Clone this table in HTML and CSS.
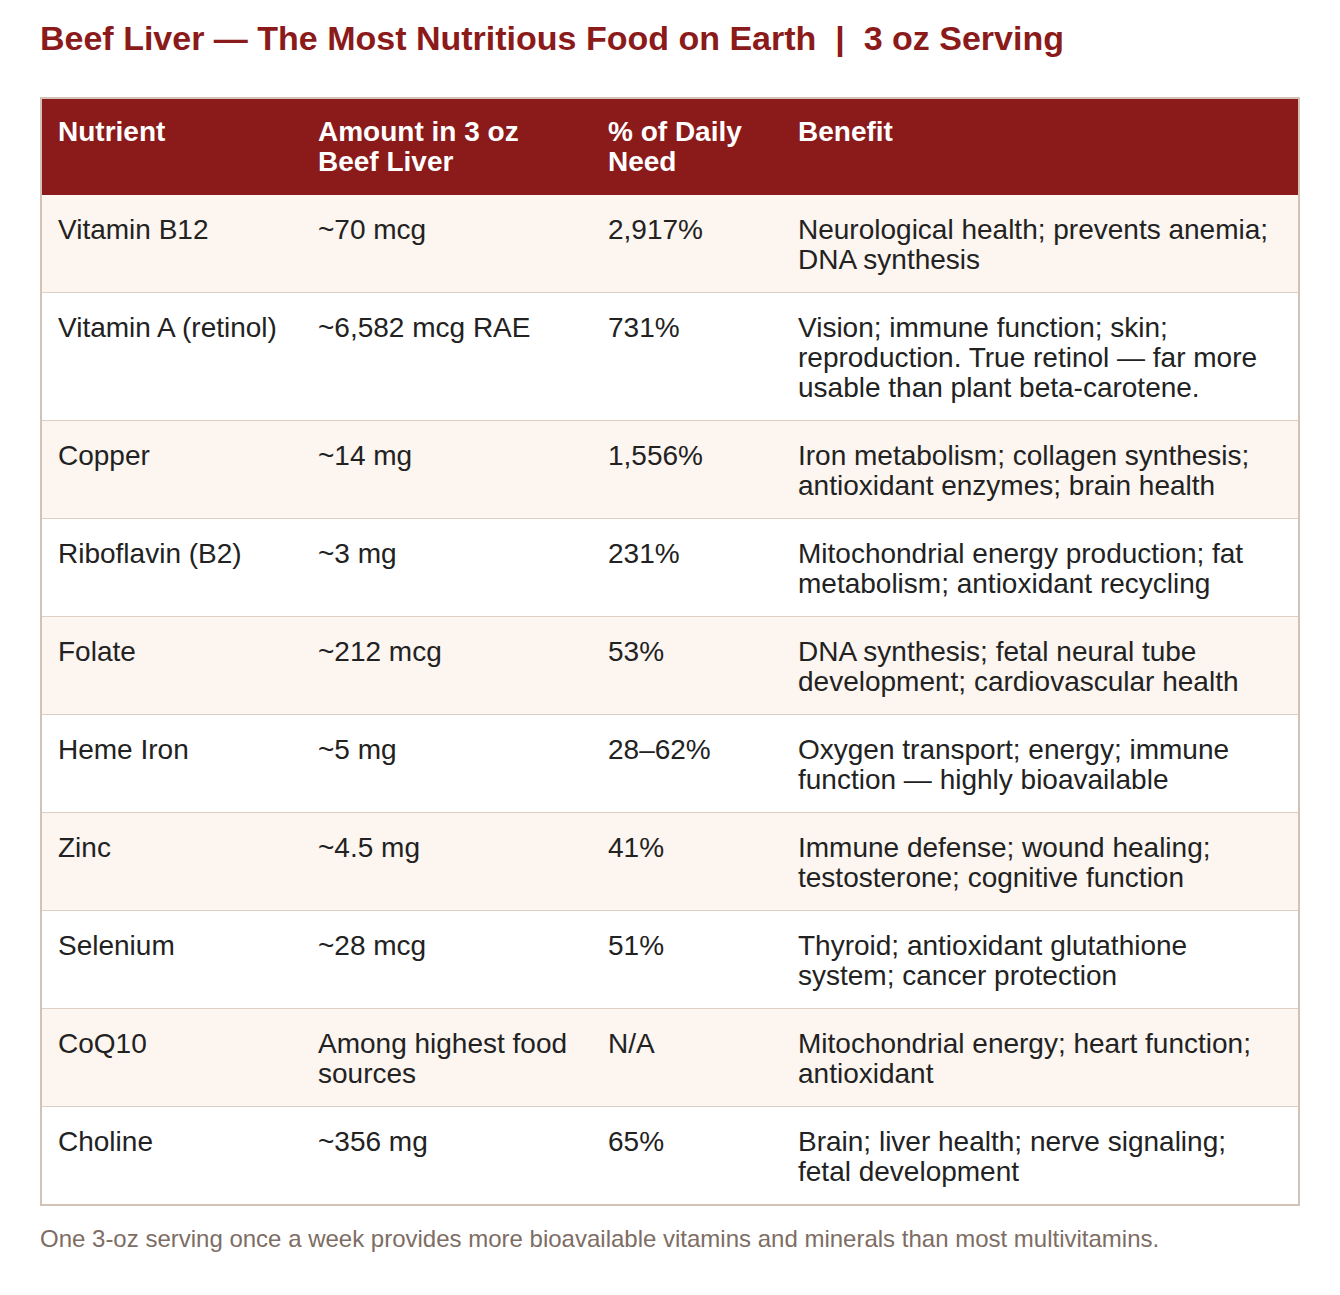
FILE: index.html
```html
<!DOCTYPE html>
<html lang="en">
<head>
<meta charset="utf-8">
<title>Beef Liver — The Most Nutritious Food on Earth</title>
<link rel="stylesheet" href="styles.css">
</head>
<body>
<main class="page">
  <h1 class="title">Beef Liver — The Most Nutritious Food on Earth &nbsp;|&nbsp; 3 oz Serving</h1>
  <div class="table-wrap">
    <table class="nutrients">
      <colgroup>
        <col class="c1"><col class="c2"><col class="c3"><col class="c4">
      </colgroup>
      <thead>
        <tr><th>Nutrient</th><th>Amount in 3 oz Beef Liver</th><th>% of Daily Need</th><th>Benefit</th></tr>
      </thead>
      <tbody>
        <tr><td>Vitamin B12</td><td>~70 mcg</td><td>2,917%</td><td>Neurological health; prevents anemia; DNA synthesis</td></tr>
        <tr><td>Vitamin A (retinol)</td><td>~6,582 mcg RAE</td><td>731%</td><td>Vision; immune function; skin; reproduction. True retinol — far more usable than plant beta-carotene.</td></tr>
        <tr><td>Copper</td><td>~14 mg</td><td>1,556%</td><td>Iron metabolism; collagen synthesis; antioxidant enzymes; brain health</td></tr>
        <tr><td>Riboflavin (B2)</td><td>~3 mg</td><td>231%</td><td>Mitochondrial energy production; fat metabolism; antioxidant recycling</td></tr>
        <tr><td>Folate</td><td>~212 mcg</td><td>53%</td><td>DNA synthesis; fetal neural tube development; cardiovascular health</td></tr>
        <tr><td>Heme Iron</td><td>~5 mg</td><td>28–62%</td><td>Oxygen transport; energy; immune function — highly bioavailable</td></tr>
        <tr><td>Zinc</td><td>~4.5 mg</td><td>41%</td><td>Immune defense; wound healing; testosterone; cognitive function</td></tr>
        <tr><td>Selenium</td><td>~28 mcg</td><td>51%</td><td>Thyroid; antioxidant glutathione system; cancer protection</td></tr>
        <tr><td>CoQ10</td><td>Among highest food sources</td><td>N/A</td><td>Mitochondrial energy; heart function; antioxidant</td></tr>
        <tr><td>Choline</td><td>~356 mg</td><td>65%</td><td>Brain; liver health; nerve signaling; fetal development</td></tr>
      </tbody>
    </table>
  </div>
  <p class="note">One 3-oz serving once a week provides more bioavailable vitamins and minerals than most multivitamins.</p>
</main>
</body>
</html>
```
FILE: styles.css
```css
html, body {
  margin: 0;
  padding: 0;
  background: #ffffff;
}

body {
  font-family: "Liberation Sans", Arial, sans-serif;
  color: #222222;
}

.page {
  padding: 19px 40px 40px;
}

.title {
  margin: 0 0 39px;
  font-size: 34px;
  font-weight: 700;
  line-height: 39px;
  color: #8b1a1a;
}

.table-wrap {
  border: 2px solid #d3c3b6;
}

.nutrients {
  width: 100%;
  border-collapse: collapse;
  table-layout: fixed;
  font-size: 28px;
  line-height: 30px;
}

.c1 { width: 260px; }
.c2 { width: 290px; }
.c3 { width: 190px; }
.c4 { width: auto; }

.nutrients th,
.nutrients td {
  text-align: left;
  vertical-align: top;
}

.nutrients thead th {
  background: #8b1a1a;
  color: #ffffff;
  font-weight: 700;
  padding: 18px 16px 18px;
}

.nutrients tbody td {
  padding: 20px 16px 17px;
}

.nutrients tbody tr {
  border-top: 1px solid #ddcfc4;
}

.nutrients tbody tr:first-child {
  border-top: none;
}

.nutrients tbody tr:nth-child(odd) {
  background: #fcf5f0;
}

.nutrients tbody tr:nth-child(even) {
  background: #ffffff;
}

.note {
  margin: 19px 0 0;
  font-size: 24px;
  line-height: 28px;
  color: #7d6d64;
}
```
